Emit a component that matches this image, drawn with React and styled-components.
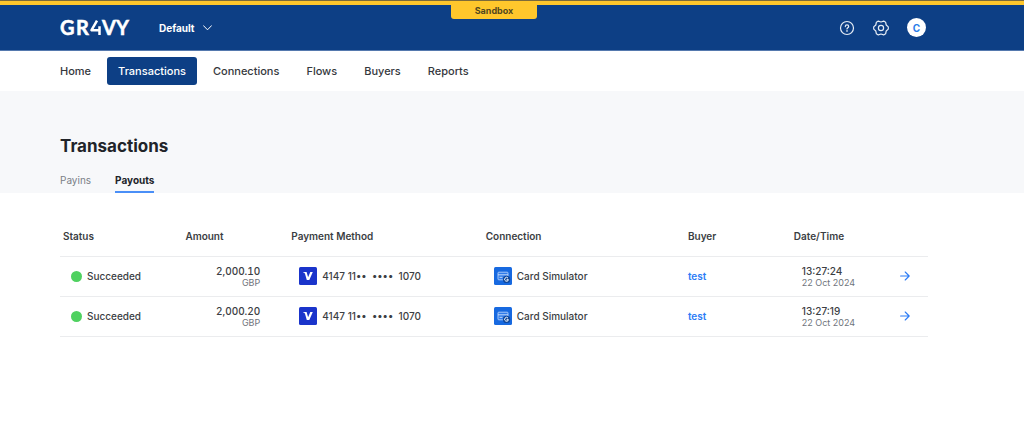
import React, { useState } from 'react';
import styled, { createGlobalStyle } from 'styled-components';

const GlobalStyle = createGlobalStyle`
  * {
    box-sizing: border-box;
  }

  body {
    margin: 0;
    background: #ffffff;
    color: #3b3e43;
    font-family: Inter, 'Liberation Sans', sans-serif;
    font-size: 10px;
    line-height: 12px;
  }

  button {
    border: 0;
    padding: 0;
    background: none;
    color: inherit;
    font: inherit;
    cursor: pointer;
  }

  a {
    color: inherit;
    text-decoration: none;
  }

  svg {
    display: block;
  }
`;

const EnvironmentBar = styled.div`
  display: flex;
  justify-content: center;
  height: 5px;
  padding-right: 36px;
  border-top: 1px solid #7d6b3a;
  background: #ffc72c;
`;

const EnvironmentLabel = styled.span`
  position: relative;
  z-index: 1;
  width: 86px;
  height: 18px;
  border-radius: 0 0 3px 3px;
  background: #ffc72c;
  color: #54481f;
  font-size: 9px;
  font-weight: 700;
  line-height: 20px;
  text-align: center;
`;

const Header = styled.header`
  display: flex;
  align-items: center;
  height: 46px;
  padding: 0 98px 0 60px;
  border-bottom: 1px solid #5579ae;
  background: #0d3f85;
  color: #ffffff;
`;

const AccountButton = styled.button`
  display: flex;
  align-items: center;
  gap: 8px;
  margin-left: 28px;
  font-weight: 700;
`;

const HeaderActions = styled.div`
  display: flex;
  align-items: center;
  gap: 18px;
  margin-left: auto;
`;

const Avatar = styled.button`
  width: 19px;
  height: 19px;
  border-radius: 50%;
  background: #ffffff;
  color: #2b7de9;
  font-size: 10px;
  font-weight: 700;
`;

const Nav = styled.nav`
  display: flex;
  align-items: center;
  gap: 5px;
  height: 40px;
  padding: 0 49px;
`;

const NavLink = styled.a`
  padding: 8px 11px;
  border-radius: 3px;
  background: ${({ $active }) => ($active ? '#0d3f85' : 'transparent')};
  color: ${({ $active }) => ($active ? '#ffffff' : '#35383d')};
  font-size: 11px;
  font-weight: 500;
`;

const PageHeader = styled.section`
  padding: 44px 96px 0 60px;
  background: #f7f8fa;
`;

const Title = styled.h1`
  margin: 0;
  color: #212429;
  font-size: 17px;
  font-weight: 700;
  line-height: 22px;
`;

const Tabs = styled.div`
  display: flex;
  gap: 24px;
  margin-top: 14px;
`;

const Tab = styled.button`
  height: 22px;
  padding-bottom: 2px;
  border-bottom: 2px solid ${({ $active }) => ($active ? '#4a8ff7' : 'transparent')};
  color: ${({ $active }) => ($active ? '#212429' : '#7a7f87')};
  font-weight: ${({ $active }) => ($active ? 700 : 400)};
`;

const Content = styled.main`
  padding: 23px 96px 40px 60px;
`;

const Table = styled.table`
  width: 100%;
  border-collapse: collapse;
  table-layout: fixed;
`;

const HeadCell = styled.th`
  width: ${({ $width }) => $width};
  height: 40px;
  padding: 0 3px;
  border-bottom: 1px solid #ebecee;
  font-weight: 600;
  text-align: left;
`;

const Cell = styled.td`
  height: 40px;
  padding: 0 ${({ $end }) => ($end ? '28px' : '3px')} 0 ${({ $flush }) => ($flush ? '3px' : '11px')};
  border-bottom: 1px solid #ebecee;
  font-weight: 500;
  font-variant-numeric: ${({ $end }) => ($end ? 'tabular-nums' : 'normal')};
  text-align: ${({ $end }) => ($end ? 'right' : 'left')};
`;

const Inline = styled.div`
  display: flex;
  align-items: center;
  gap: 5px;
`;

const CardNumber = styled.span`
  white-space: pre;
`;

const StatusDot = styled.span`
  width: 11px;
  height: 11px;
  border-radius: 50%;
  background: #4fd160;
`;

const Muted = styled.div`
  color: #6f747c;
  font-size: 9px;
  font-weight: 400;
  line-height: 11px;
`;

const BuyerLink = styled.a`
  color: #2b7cf6;
  font-weight: 600;
`;

const RowLink = styled.a`
  display: flex;
  justify-content: flex-end;
  padding-right: 15px;
`;

const Logo = () => (
  <svg width="71" height="26" viewBox="0 -5 71 26" role="img" aria-label="GR4VY">
    <g fill="#ffffff" stroke="#ffffff" strokeWidth=".5" fontFamily="Lato, sans-serif" fontSize="20" fontWeight="700">
      <text x="0" y="15">G</text>
      <text x="16" y="15">R</text>
      <text x="42" y="15">V</text>
      <text x="56" y="15">Y</text>
    </g>
    <path d="M37 .7 31.500 10.200H39.500M39.500 6.300V15" fill="none" stroke="#ffffff" strokeWidth="2.500" strokeLinejoin="round" />
  </svg>
);

const ChevronIcon = () => (
  <svg width="9" height="6" viewBox="0 0 9 6" fill="none" stroke="#ffffff" strokeLinecap="round" strokeLinejoin="round">
    <path d="M.5 .7 4.5 4.8 8.5 .7" />
  </svg>
);

const HelpIcon = () => (
  <svg width="16" height="16" viewBox="0 0 16 16" fill="none" stroke="#e6edf6" strokeWidth="1.2" strokeLinecap="round">
    <circle cx="8" cy="8" r="6.5" />
    <path d="M6.3 6.6C6.3 5.5 7 4.9 8 4.9s1.7.6 1.7 1.5c0 1.2-1.7 1.3-1.7 2.5" />
    <circle cx="8" cy="10.9" r=".3" />
  </svg>
);

const SettingsIcon = () => (
  <svg width="16" height="16" viewBox="0 0 16 16" fill="none" stroke="#e6edf6" strokeWidth="1.2" strokeLinejoin="round">
    <path d="M15.3 9.1 13.2 11l-.6 2.8-1.9 1.1L8 14l-2.7.9-1.9-1.1L2.8 11 .7 9.1V6.9L2.8 5l.6-2.8 1.9-1.1L8 2l2.7-.9 1.9 1.1.6 2.8 2.1 1.9z" />
    <circle cx="8" cy="8" r="2.6" />
  </svg>
);

const VisaIcon = () => (
  <svg width="18" height="18" viewBox="0 0 18 18" role="img" aria-label="Visa">
    <rect width="18" height="18" rx="1.5" fill="#1a34cb" />
    <path d="M4.2 5h3.4l1.5 5.2L11.3 5h2.5l-3.5 8H7.8L6 6.7C5.7 6 5 5.6 4.2 5.5z" fill="#ffffff" />
  </svg>
);

const CardIcon = () => (
  <svg width="18" height="18" viewBox="0 0 18 18" aria-hidden="true">
    <rect width="18" height="18" rx="1.5" fill="#1769e0" />
    <rect x="4" y="5.2" width="10" height="7.6" rx=".8" fill="#2f7bea" stroke="#b5d1fb" strokeWidth=".9" />
    <path d="M4 7.8h10M5.5 10.3h3" stroke="#d5e4fc" strokeWidth=".9" />
    <circle cx="12.6" cy="12.4" r="3.7" fill="#10489c" />
    <path d="M14 11.1a1.9 1.9 0 1 0 .4 1.6h-1.8" fill="none" stroke="#ffffff" strokeWidth="1" />
  </svg>
);

const ArrowIcon = () => (
  <svg width="10" height="10" viewBox="0 0 10 10" fill="none" stroke="#2b7cf6" strokeWidth="1.1" strokeLinecap="round" strokeLinejoin="round">
    <path d="M.6 5h8.6M5.2 1l4 4-4 4" />
  </svg>
);

const navItems = ['Home', 'Transactions', 'Connections', 'Flows', 'Buyers', 'Reports'];

const columns = [
  { name: 'Status', width: '14.1%' },
  { name: 'Amount', width: '12.2%' },
  { name: 'Payment Method', width: '22.4%' },
  { name: 'Connection', width: '23.3%' },
  { name: 'Buyer', width: '12.2%' },
  { name: 'Date/Time', width: '10%' },
];

const payouts = [
  { amount: '2,000.10', time: '13:27:24' },
  { amount: '2,000.20', time: '13:27:19' },
];

const App = () => {
  const [tab, setTab] = useState('Payouts');

  return (
    <>
      <GlobalStyle />
      <EnvironmentBar>
        <EnvironmentLabel>Sandbox</EnvironmentLabel>
      </EnvironmentBar>
      <Header>
        <Logo />
        <AccountButton>
          Default
          <ChevronIcon />
        </AccountButton>
        <HeaderActions>
          <button aria-label="Help"><HelpIcon /></button>
          <button aria-label="Settings"><SettingsIcon /></button>
          <Avatar aria-label="Account C">C</Avatar>
        </HeaderActions>
      </Header>
      <Nav>
        {navItems.map((item) => (
          <NavLink key={item} href={`#${item.toLowerCase()}`} $active={item === 'Transactions'}>
            {item}
          </NavLink>
        ))}
      </Nav>
      <PageHeader>
        <Title>Transactions</Title>
        <Tabs role="tablist">
          {['Payins', 'Payouts'].map((name) => (
            <Tab key={name} role="tab" aria-selected={tab === name} $active={tab === name} onClick={() => setTab(name)}>
              {name}
            </Tab>
          ))}
        </Tabs>
      </PageHeader>
      <Content>
        <Table>
          <thead>
            <tr>
              {columns.map((column) => (
                <HeadCell key={column.name} $width={column.width}>{column.name}</HeadCell>
              ))}
              <HeadCell aria-label="Details" />
            </tr>
          </thead>
          <tbody>
            {payouts.map((payout) => (
              <tr key={payout.time}>
                <Cell>
                  <Inline><StatusDot />Succeeded</Inline>
                </Cell>
                <Cell $end>
                  {payout.amount}
                  <Muted>GBP</Muted>
                </Cell>
                <Cell>
                  <Inline>
                    <VisaIcon />
                    <CardNumber>{'4147 11••  ••••  1070'}</CardNumber>
                  </Inline>
                </Cell>
                <Cell>
                  <Inline><CardIcon />Card Simulator</Inline>
                </Cell>
                <Cell $flush>
                  <BuyerLink href="#buyer">test</BuyerLink>
                </Cell>
                <Cell>
                  {payout.time}
                  <Muted>22 Oct 2024</Muted>
                </Cell>
                <Cell>
                  <RowLink href="#payout" aria-label="View payout"><ArrowIcon /></RowLink>
                </Cell>
              </tr>
            ))}
          </tbody>
        </Table>
      </Content>
    </>
  );
};

export default App;
